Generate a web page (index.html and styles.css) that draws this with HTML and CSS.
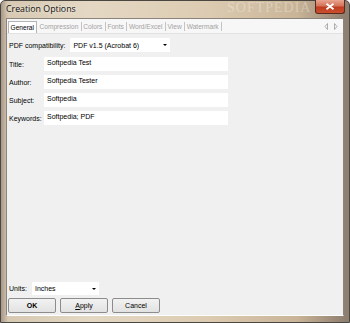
FILE: index.html
```html
<!DOCTYPE html>
<html lang="en">
<head>
    <meta charset="UTF-8">
    <title>Creation Options</title>
    <link rel="stylesheet" href="styles.css">
</head>
<body>
    <div class="window">
        <!-- Title bar -->
        <div class="titlebar">
            <span class="title">Creation Options</span>
            <span class="watermark">SOFTPEDIA</span>
            <div class="close-btn">
                <svg width="10" height="7" viewBox="0 0 10 7">
                    <path d="M1.5 0.8 L8.5 6.2 M8.5 0.8 L1.5 6.2" stroke="#fff" stroke-width="1.8"/>
                </svg>
            </div>
        </div>

        <div class="client">
            <!-- Tabs -->
            <div class="tabs">
                <span class="tab active">General</span>
                <span class="tab">Compression</span>
                <span class="tab">Colors</span>
                <span class="tab">Fonts</span>
                <span class="tab">Word/Excel</span>
                <span class="tab">View</span>
                <span class="tab">Watermark</span>
                <span class="tab-scroll">
                    <svg width="14" height="7" viewBox="0 0 14 7">
                        <path d="M3.5 0.5 L1 3.5 L3.5 6.5 Z" fill="none" stroke="#9a9a9a" stroke-width="0.8"/>
                        <path d="M10.5 0.5 L13 3.5 L10.5 6.5 Z" fill="none" stroke="#9a9a9a" stroke-width="0.8"/>
                    </svg>
                </span>
            </div>

            <!-- General page -->
            <div class="page">
                <div class="row">
                    <span class="label">PDF compatibility:</span>
                    <div class="combo compat">
                        <span>PDF v1.5 (Acrobat 6)</span>
                        <span class="arrow"></span>
                    </div>
                </div>
                <div class="row field first">
                    <span class="label">Title:</span>
                    <div class="input">Softpedia Test</div>
                </div>
                <div class="row field">
                    <span class="label">Author:</span>
                    <div class="input">Softpedia Tester</div>
                </div>
                <div class="row field">
                    <span class="label">Subject:</span>
                    <div class="input">Softpedia</div>
                </div>
                <div class="row field">
                    <span class="label">Keywords:</span>
                    <div class="input">Softpedia; PDF</div>
                </div>
            </div>

            <!-- Bottom -->
            <div class="footer">
                <div class="row units">
                    <span class="label">Units:</span>
                    <div class="combo unit-combo">
                        <span>Inches</span>
                        <span class="arrow"></span>
                    </div>
                </div>
                <div class="buttons">
                    <button class="btn default">OK</button>
                    <button class="btn"><u>A</u>pply</button>
                    <button class="btn">Cancel</button>
                </div>
            </div>
        </div>
    </div>
</body>
</html>
```

FILE: styles.css
```css
body {
    margin: 0;
    padding: 0;
    width: 350px;
    height: 323px;
    overflow: hidden;
    font-family: "Liberation Sans", Arial, sans-serif;
    font-size: 7px;
    color: #000;
}

.window {
    width: 350px;
    height: 323px;
    box-sizing: border-box;
    display: flex;
    flex-direction: column;
    padding: 0 5px 6px 5px;
    background: linear-gradient(90deg, #a8988a 0%, #d6c8b1 2%, #e4d8c4 25%, #dccbb1 60%, #c9b497 85%, #8f7f70 99%);
    border: 1px solid #4a4642;
    border-radius: 5px 5px 0 0;
    position: relative;
}

.titlebar {
    height: 17px;
    display: flex;
    align-items: flex-start;
}

.title {
    font-family: "Open Sans", "Liberation Sans", sans-serif;
    font-size: 8.8px;
    color: #111;
    padding: 2px 0 0 0;
    text-shadow: 0 0 4px rgba(255, 255, 255, 0.9);
}

/* faint screenshot watermark behind the caption */
.watermark {
    position: absolute;
    left: 226px;
    top: -1px;
    font-family: "Liberation Serif", serif;
    font-size: 14px;
    letter-spacing: 1px;
    color: rgba(255, 255, 255, 0.3);
}

.close-btn {
    margin-left: auto;
    margin-top: -1px;
    margin-right: -1px;
    width: 28px;
    height: 13px;
    border: 1px solid #5a2a1e;
    border-top: none;
    border-radius: 0 0 3px 3px;
    background: linear-gradient(#e8a590 0%, #d5735a 45%, #bd3d20 55%, #cb4f2f 100%);
    display: flex;
    justify-content: center;
    align-items: center;
    position: relative;
}

.client {
    flex: 1;
    background-color: #f0f0f0;
    border: 1px solid #8a847c;
    border-bottom-color: #fff;
    display: flex;
    flex-direction: column;
}

.tabs {
    height: 14px;
    display: flex;
    align-items: flex-end;
    padding-left: 1px;
    background-color: #f7f7f7;
    font-size: 6.6px;
}

.tab {
    color: #a3a3a3;
    padding: 0 2.5px 0 1.5px;
    border-right: 1px solid #c4c4c4;
    line-height: 9px;
    height: 9px;
    margin-bottom: 2px;
}

.tab.active {
    color: #000;
    background-color: #fff;
    border: 1px solid #b4b4b4;
    border-bottom: none;
    margin-bottom: 0;
    height: 11px;
    line-height: 11px;
    padding: 0 2px 0 1.5px;
    margin-right: 1px;
}

.tab-scroll {
    margin-left: auto;
    padding-right: 5px;
    margin-bottom: 3px;
    display: flex;
}

.page {
    padding: 4px 0 0 2px;
    flex: 1;
    border-top: 1px solid #e2e2e2;
}

.row {
    display: flex;
    align-items: center;
}

.combo {
    background-color: #fff;
    height: 14px;
    display: flex;
    align-items: center;
    padding-left: 3px;
    box-sizing: border-box;
}

.compat {
    width: 100px;
    margin-left: 5px;
}

.arrow {
    margin-left: auto;
    margin-right: 3px;
    width: 0;
    height: 0;
    border-left: 2px solid transparent;
    border-right: 2px solid transparent;
    border-top: 2px solid #000;
}

.field {
    margin-top: 4px;
}

.field.first {
    margin-top: 5px;
}

.field .label {
    width: 35px;
}

.input {
    width: 184px;
    height: 14px;
    background-color: #fff;
    padding-left: 3px;
    box-sizing: border-box;
    line-height: 12px;
}

.footer {
    padding: 0 0 2px 1px;
}

.units .label {
    width: 23px;
    padding-left: 1px;
}

.unit-combo {
    width: 67px;
    height: 13px;
}

.buttons {
    display: flex;
    gap: 4px;
    margin-top: 3px;
}

.btn {
    width: 48px;
    height: 15px;
    font-family: "Liberation Sans", Arial, sans-serif;
    font-size: 7px;
    padding: 0;
    background: linear-gradient(#f2f2f2, #e2e2e2);
    border: 1px solid #8c8c8c;
    border-radius: 2px;
    color: #000;
}

.btn.default {
    font-weight: bold;
}
```
